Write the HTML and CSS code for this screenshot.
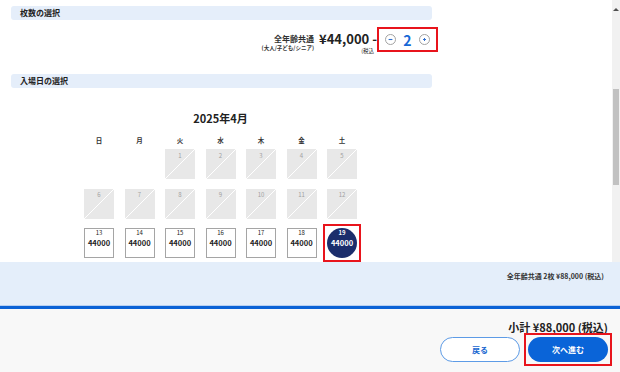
FILE: index.html
```html
<!DOCTYPE html>
<html lang="ja">
<head>
<meta charset="utf-8">
<title>チケット選択</title>
<link rel="stylesheet" href="styles.css">
</head>
<body>
<div class="app">
  <div class="scroll-area">
    <main class="main">
      <div class="section-title">枚数の選択</div>
      <div class="ticket-row">
        <div class="ticket-label">
          <span class="ticket-name">全年齢共通</span>
          <span class="ticket-sub">(大人/子ども/シニア)</span>
        </div>
        <div class="ticket-price">
          <span class="amount">¥44,000 -</span>
          <span class="tax">(税込</span>
        </div>
        <div class="counter">
          <span class="round-btn">
            <svg width="11" height="11" viewBox="0 0 11 11"><circle cx="5.5" cy="5.5" r="5" fill="#fff" stroke="#a2a2a2" stroke-width="1"/><line x1="3.6" y1="5.5" x2="7.4" y2="5.5" stroke="#2f6fcf" stroke-width="1.1"/></svg>
          </span>
          <span class="qty">2</span>
          <span class="round-btn">
            <svg width="11" height="11" viewBox="0 0 11 11"><circle cx="5.5" cy="5.5" r="5" fill="#fff" stroke="#a2a2a2" stroke-width="1"/><line x1="4" y1="5.5" x2="7" y2="5.5" stroke="#2f6fcf" stroke-width="1"/><line x1="5.5" y1="4" x2="5.5" y2="7" stroke="#2f6fcf" stroke-width="1"/></svg>
          </span>
        </div>
      </div>

      <div class="section-title second">入場日の選択</div>
      <div class="calendar">
        <div class="cal-title">2025年4月</div>
        <div class="weekdays">
          <span>日</span><span>月</span><span>火</span><span>水</span><span>木</span><span>金</span><span>土</span>
        </div>
        <div class="days">
          <div class="day empty"></div>
          <div class="day empty"></div>
          <div class="day off"><span class="day-num">1</span></div>
          <div class="day off"><span class="day-num">2</span></div>
          <div class="day off"><span class="day-num">3</span></div>
          <div class="day off"><span class="day-num">4</span></div>
          <div class="day off"><span class="day-num">5</span></div>
          <div class="day off"><span class="day-num">6</span></div>
          <div class="day off"><span class="day-num">7</span></div>
          <div class="day off"><span class="day-num">8</span></div>
          <div class="day off"><span class="day-num">9</span></div>
          <div class="day off"><span class="day-num">10</span></div>
          <div class="day off"><span class="day-num">11</span></div>
          <div class="day off"><span class="day-num">12</span></div>
          <div class="day on"><span class="day-num">13</span><span class="day-price">44000</span></div>
          <div class="day on"><span class="day-num">14</span><span class="day-price">44000</span></div>
          <div class="day on"><span class="day-num">15</span><span class="day-price">44000</span></div>
          <div class="day on"><span class="day-num">16</span><span class="day-price">44000</span></div>
          <div class="day on"><span class="day-num">17</span><span class="day-price">44000</span></div>
          <div class="day on"><span class="day-num">18</span><span class="day-price">44000</span></div>
          <div class="day selected"><div class="circle"><span class="day-num">19</span><span class="day-price">44000</span></div></div>
        </div>
      </div>
    </main>
    <div class="scrollbar">
      <span class="scroll-arrow"></span>
      <span class="scroll-thumb"></span>
    </div>
  </div>

  <div class="summary">全年齢共通 2枚 ¥88,000 (税込)</div>

  <footer class="footer">
    <div class="subtotal">小計 ¥88,000 (税込)</div>
    <div class="actions">
      <button class="btn btn-back">戻る</button>
      <div class="focus-ring"><button class="btn btn-next">次へ進む</button></div>
    </div>
  </footer>
</div>
</body>
</html>
```

FILE: styles.css
```css
* { box-sizing: border-box; margin: 0; padding: 0; }
html, body { width: 620px; height: 372px; overflow: hidden; }
body {
  font-family: "Noto Sans CJK JP", "Noto Sans", sans-serif;
  color: #222;
  background: #fff;
}
.app { display: flex; flex-direction: column; height: 372px; }

.scroll-area { display: flex; height: 262px; flex: none; }
.main { flex: 1; padding: 6px 180px 0 11px; }
.scrollbar {
  width: 8px;
  background: #f1f1f1;
  display: flex;
  flex-direction: column;
  align-items: center;
}
.scroll-arrow {
  width: 0; height: 0;
  border-left: 3px solid transparent;
  border-right: 3px solid transparent;
  border-bottom: 3px solid #505050;
  margin-top: 8px;
}
.scroll-thumb { width: 6px; height: 96px; background: #c1c1c1; margin-top: 78px; }

.section-title {
  height: 14px;
  line-height: 14px;
  padding-left: 9px;
  background: #e5eefa;
  border-radius: 3px;
  font-size: 8px;
  font-weight: 700;
}
.section-title.second { margin-top: 22px; }

.ticket-row {
  display: flex;
  justify-content: flex-end;
  align-items: flex-start;
  margin-top: 7px;
  margin-right: -6px;
  height: 25px;
}
.ticket-label {
  display: flex;
  flex-direction: column;
  align-items: flex-end;
  padding-top: 7px;
  margin-right: 5px;
}
.ticket-name { font-size: 8px; line-height: 10px; font-weight: 700; color: #333; }
.ticket-sub { font-size: 5.5px; line-height: 7px; margin-top: 1px; font-weight: 700; color: #333; }
.ticket-price {
  display: flex;
  flex-direction: column;
  align-items: flex-end;
  padding-top: 5px;
}
.amount { font-size: 13px; line-height: 13px; font-weight: 700; }
.tax { font-size: 5.5px; line-height: 7px; padding-right: 3px; margin-top: 3px; }
.counter {
  display: flex;
  align-items: center;
  width: 61px;
  height: 25px;
  border: 2px solid #e8141c;
  padding-left: 6px;
  gap: 5.5px;
  background: #fff;
}
.round-btn { width: 11px; height: 11px; display: flex; }
.qty {
  width: 12px;
  text-align: center;
  font-size: 14px;
  line-height: 16px;
  font-weight: 700;
  color: #1768d6;
}

.calendar { margin-left: 73px; width: 273px; }
.cal-title {
  text-align: center;
  font-size: 11px;
  font-weight: 700;
  line-height: 14px;
  margin-top: 23px;
}
.weekdays, .days {
  display: grid;
  grid-template-columns: repeat(7, 30px);
  column-gap: 10.5px;
}
.weekdays {
  margin-top: 10px;
  font-size: 6.5px;
  line-height: 10px;
  font-weight: 700;
  text-align: center;
  color: #333;
}
.days { margin-top: 4px; grid-auto-rows: 30px; row-gap: 9.5px; }
.day {
  display: flex;
  flex-direction: column;
  align-items: center;
}
.day-num { font-size: 6px; line-height: 7px; }
.day-price { font-size: 7.5px; line-height: 9px; font-weight: 700; margin-top: 2px; }
.day.off {
  background: linear-gradient(to bottom right, transparent calc(50% - 0.6px), #fff 50%, transparent calc(50% + 0.6px)), #e8e8e8;
  color: #a0a0a0;
}
.day.off .day-num { margin-top: 2.5px; }
.day.on { border: 1px solid #a5a5a5; background: #fff; color: #222; }
.day.selected { outline: 2px solid #e8141c; outline-offset: 2px; }
.circle {
  width: 30px;
  height: 30px;
  border-radius: 50%;
  background: #1b2e6c;
  color: #fff;
  display: flex;
  flex-direction: column;
  align-items: center;
  padding-top: 1px;
}
.circle .day-num { font-weight: 700; }

.summary {
  flex: none;
  height: 44px;
  background: #e4eefa;
  border-bottom: 1px solid #b7d0f2;
  text-align: right;
  padding: 9px 16px 0 0;
  font-size: 7px;
  line-height: 10px;
  font-weight: 700;
  color: #333;
}

.footer {
  flex: 1;
  background: #f8f8f8;
  border-top: 3px solid #0a62d6;
  padding: 11px 12px 0 0;
  display: flex;
  flex-direction: column;
  align-items: flex-end;
}
.subtotal { font-size: 11px; line-height: 14px; font-weight: 700; }
.actions { display: flex; gap: 8px; margin-top: 3px; }
.btn {
  width: 80px;
  height: 25px;
  border-radius: 13px;
  font-family: inherit;
  font-size: 8px;
  font-weight: 700;
  display: flex;
  align-items: center;
  justify-content: center;
}
.btn-back { background: #fff; border: 1px solid #5d9be6; color: #1766d0; }
.btn-next { background: #0a64d8; border: none; color: #fff; }
.focus-ring { display: flex; outline: 2px solid #e8141c; outline-offset: 2px; }
```
